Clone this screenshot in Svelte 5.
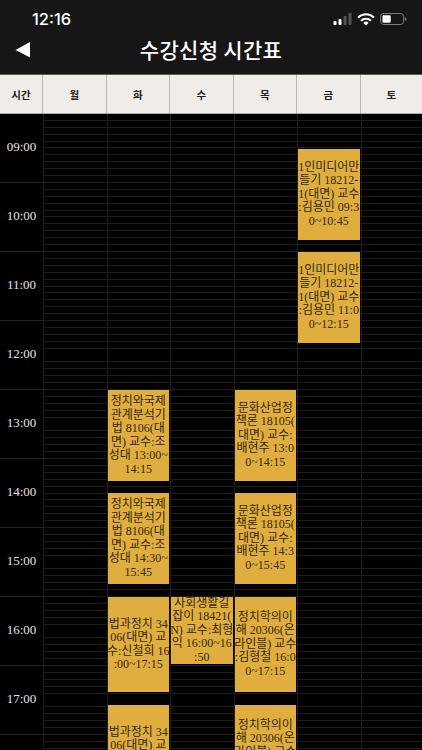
<script>
	const days = ['월', '화', '수', '목', '금', '토'];
	const hours = ['09:00', '10:00', '11:00', '12:00', '13:00', '14:00', '15:00', '16:00', '17:00'];

	// top/height are px from the top of the grid body, text keeps the app's line breaks
	const lectures = {
		화: [
			{ top: 276, height: 91, text: '정치와국제\n관계분석기\n법 8106(대\n면) 교수:조\n성대 13:00~\n14:15' },
			{ top: 379, height: 91, text: '정치와국제\n관계분석기\n법 8106(대\n면) 교수:조\n성대 14:30~\n15:45' },
			{ top: 483, height: 95, text: '법과정치 34\n06(대면) 교\n수:신철희 16\n:00~17:15' },
			{ top: 591, height: 95, text: '법과정치 34\n06(대면) 교\n수:신철희 17\n:30~18:45' }
		],
		수: [{ top: 483, height: 67, text: '사회생활길\n잡이 18421(\nN) 교수:최형\n익 16:00~16\n:50' }],
		목: [
			{ top: 276, height: 91, text: '문화산업정\n책론 18105(\n대면) 교수:\n배현주 13:0\n0~14:15' },
			{ top: 379, height: 91, text: '문화산업정\n책론 18105(\n대면) 교수:\n배현주 14:3\n0~15:45' },
			{ top: 483, height: 95, text: '정치학의이\n해 20306(온\n라인블) 교수\n:김형철 16:0\n0~17:15' },
			{ top: 591, height: 95, text: '정치학의이\n해 20306(온\n라인블) 교수\n:김형철 17:3\n0~18:45' }
		],
		금: [
			{ top: 35, height: 91, text: '1인미디어만\n들기 18212-\n1(대면) 교수\n:김용민 09:3\n0~10:45' },
			{ top: 138, height: 91, text: '1인미디어만\n들기 18212-\n1(대면) 교수\n:김용민 11:0\n0~12:15' }
		]
	};
</script>

<div class="screen">
	<header class="top">
		<div class="status">
			<span class="clock">12:16</span>
			<div class="status-icons">
				<svg width="19" height="12" viewBox="0 0 18 12">
					<rect x="0" y="8" width="3" height="4" rx="0.8" fill="#fff" />
					<rect x="5" y="6" width="3" height="6" rx="0.8" fill="#fff" />
					<rect x="10" y="3" width="3" height="9" rx="0.8" fill="#555" />
					<rect x="15" y="0" width="3" height="12" rx="0.8" fill="#555" />
				</svg>
				<svg width="18" height="13" viewBox="0 0 18 13">
					<path d="M1 4.600a11.500 11.500 0 0 1 16 0" fill="none" stroke="#fff" stroke-width="2" />
					<path d="M4 7.700a7.200 7.200 0 0 1 10 0" fill="none" stroke="#fff" stroke-width="2" />
					<path d="M9 12.600 6.400 9.900a3.700 3.700 0 0 1 5.200 0z" fill="#fff" />
				</svg>
				<svg width="27" height="12" viewBox="0 0 29 13">
					<rect x="0.5" y="0.5" width="25" height="12" rx="3.500" fill="none" stroke="#888" />
					<rect x="2.500" y="2.500" width="9" height="8" rx="1.500" fill="#fff" />
					<path d="M27 4.500c1 .3 1.600 1 1.600 2s-.6 1.700-1.600 2z" fill="#888" />
				</svg>
			</div>
		</div>
		<div class="title-bar">
			<svg class="back" width="16" height="18" viewBox="0 0 16 18">
				<path d="M15 1v15.500L0.500 9z" fill="#fff" />
			</svg>
			<h1>수강신청 시간표</h1>
		</div>
	</header>

	<div class="days">
		<div class="day-name">시간</div>
		{#each days as day}
			<div class="day-name">{day}</div>
		{/each}
	</div>

	<div class="body">
		<div class="times">
			{#each hours as hour}
				<div class="hour">{hour}</div>
			{/each}
		</div>
		{#each days as day}
			<div class="col">
				{#each lectures[day] ?? [] as lec}
					<div class="lecture" style="top: {lec.top}px; height: {lec.height}px">
						<span>{lec.text}</span>
					</div>
				{/each}
			</div>
		{/each}
	</div>
</div>

<style>
	:global(body) {
		margin: 0;
		background: #000;
	}

	.screen {
		width: 422px;
		height: 750px;
		overflow: hidden;
		background: #000;
	}

	.top {
		height: 74px;
		background: #161616;
		border-bottom: 1px solid #5a6642;
		color: #fff;
	}

	.status {
		height: 35px;
		padding: 3px 15px 0 32px;
		box-sizing: border-box;
		display: flex;
		align-items: center;
		justify-content: space-between;
	}

	.clock {
		font: 500 16.500px 'Inter', 'Liberation Sans', sans-serif;
	}

	.status-icons {
		display: flex;
		align-items: center;
		gap: 5px;
	}

	.title-bar {
		position: relative;
		height: 28px;
		display: flex;
		align-items: center;
		justify-content: center;
	}

	.back {
		position: absolute;
		left: 15px;
		top: 6px;
	}

	h1 {
		margin: 0;
		font: 500 21px 'Noto Sans CJK KR', sans-serif;
		letter-spacing: 0.3px;
	}

	.days {
		display: grid;
		grid-template-columns: 43px repeat(5, 63.500px) 1fr;
		height: 38px;
		background: #f0ede8;
		border-bottom: 1px solid #aaa;
	}

	.day-name {
		display: flex;
		align-items: center;
		justify-content: center;
		border-right: 1px solid #b8b8b4;
		font: 700 10.500px 'Noto Sans CJK KR', sans-serif;
		color: #222;
	}

	.day-name:last-child {
		border-right: none;
	}

	.body {
		display: grid;
		grid-template-columns: 43px repeat(5, 63.500px) 1fr;
		height: 636px;
	}

	.hour {
		height: 69px;
		box-sizing: border-box;
		border-bottom: 1px solid #262626;
		display: flex;
		align-items: center;
		justify-content: center;
		padding-bottom: 2px;
		font: 13px 'Liberation Serif', serif;
		color: #e4e4e4;
	}

	.col {
		position: relative;
		border-left: 1px solid #1e1e1e;
		background: repeating-linear-gradient(
			to bottom,
			#000 0,
			#000 5.900px,
			#1d1d1d 5.900px,
			#1d1d1d 6.900px
		);
	}

	.lecture {
		position: absolute;
		left: 0;
		right: 1px;
		box-sizing: border-box;
		display: flex;
		align-items: center;
		justify-content: center;
		background: #e0ae3e;
		text-align: center;
		white-space: pre;
		font: 12px 'Liberation Serif', 'Noto Sans CJK KR', serif;
		line-height: 13.500px;
		color: #33290f;
		overflow: hidden;
	}
</style>
